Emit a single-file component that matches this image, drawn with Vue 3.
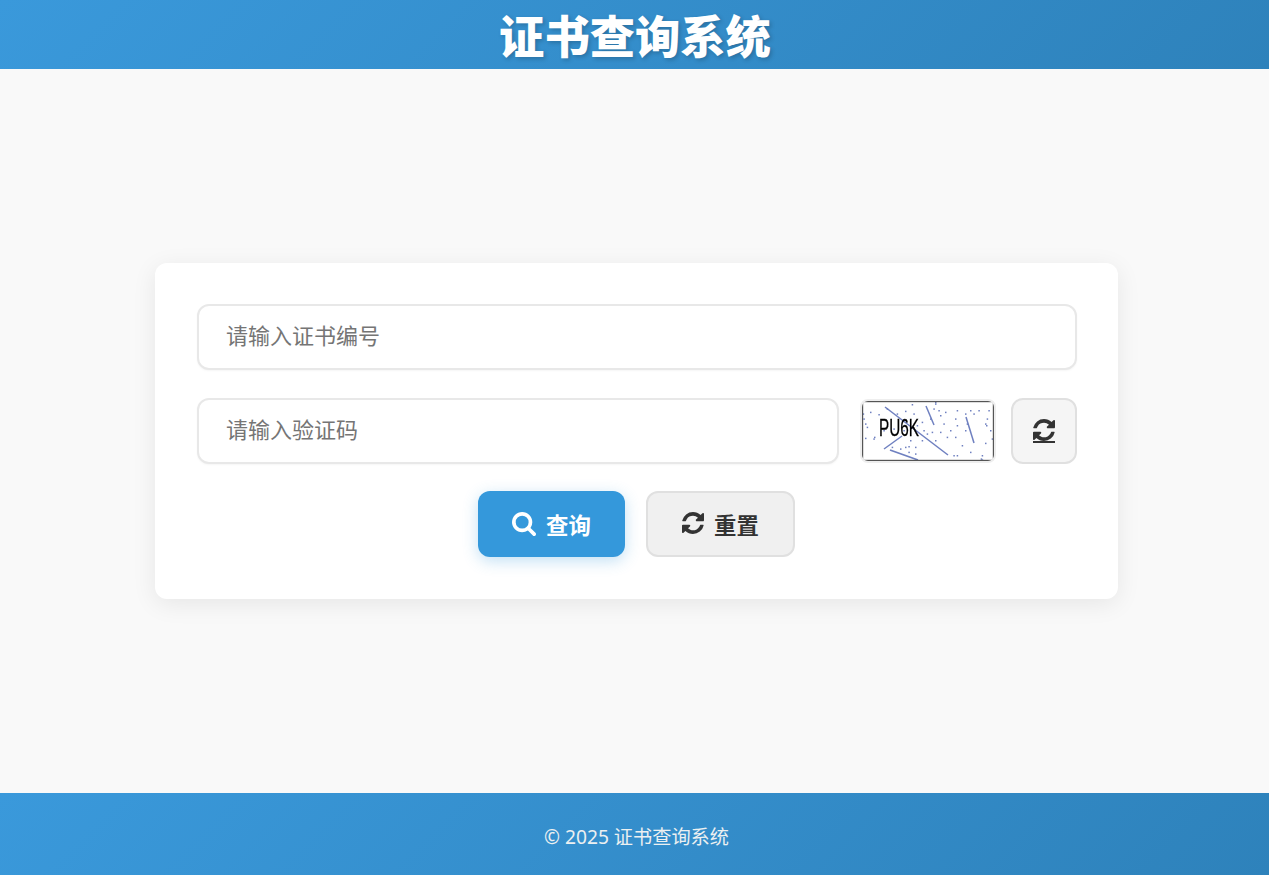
<script setup>
const refreshPath = 'M1511 928q0 5-1 7-64 268-268 434.5t-478 166.5q-146 0-282.5-55t-243.5-157l-129 129q-19 19-45 19t-45-19-19-45v-448q0-26 19-45t45-19h448q26 0 45 19t19 45-19 45l-137 137q71 66 161 102t187 36q134 0 250-65t186-179q11-17 53-117 8-23 30-23h192q13 0 22.5 9.5t9.5 22.5zm25-800v448q0 26-19 45t-45 19h-448q-26 0-45-19t-19-45 19-45l138-138q-148-137-349-137-134 0-250 65t-186 179q-11 17-53 117-8 23-30 23h-199q-13 0-22.5-9.5t-9.5-22.5v-7q65-268 270-434.5t480-166.5q146 0 284 55.5t245 156.5l130-129q19-19 45-19t45 19 19 45z'
const searchPath = 'M1152 704q0-185-131.5-316.5t-316.5-131.5-316.5 131.5-131.5 316.5 131.5 316.5 316.5 131.5 316.5-131.5 131.5-316.5zm512 832q0 52-38 90t-90 38q-54 0-90-38l-343-342q-179 124-399 124-143 0-273.5-55.5t-225-150-150-225-55.5-273.5 55.5-273.5 150-225 225-150 273.5-55.5 273.5 55.5 225 150 150 225 55.5 273.5q0 220-124 399l343 343q37 37 37 90z'
const lines = [
  [23, 6, 86, 54, 1.5],
  [64, 5, 72, 24, 1.5],
  [104, 16, 112, 42, 1.5],
  [40, 35, 22, 48, 1.5],
  [28, 49, 56, 59, 1.8],
]
// noise dots, positions read from the reference at 3x, converted to local px
const raw = [
  [185,42],[255,35],[40,85],[45,100],[60,65],[85,72],[110,55],[140,70],[165,62],[190,70],
  [45,143],[72,140],[100,120],[130,115],[220,120],[245,125],[270,125],[215,95],[240,85],[265,60],
  [285,65],[270,75],[315,85],[320,105],[315,140],[345,70],[360,60],[370,70],[410,85],[408,105],
  [425,145],[430,190],[405,158],[360,185],[395,195],[392,205],[310,195],[320,195],[310,210],[255,150],
  [215,150],[195,170],[175,168],[175,185],[195,190],[165,170],[125,170],[230,130],[290,140],[345,120],
  [50,110],[38,70],[70,145],[160,120],[200,105],[280,100],[300,120],[335,165],[385,60],[420,120],
  [415,60],[405,100],[350,100],[250,55],[320,60],[255,40],[200,210],[395,208],[180,150],[150,175]
]
const dots = raw.map(([x, y]) => [x / 3 - 12, y / 3 - 11])
</script>

<template>
  <div class="page">
    <header class="top">
      <h1>证书查询系统</h1>
    </header>
    <main class="main">
      <form class="card" @submit.prevent>
        <input class="field" type="text" placeholder="请输入证书编号" />
        <div class="captcha-row">
          <input class="field grow" type="text" placeholder="请输入验证码" />
          <div class="captcha">
            <svg viewBox="0 0 132 60" width="132" height="60">
              <rect x="0" y="0" width="132" height="60" fill="#fff" />
              <rect v-for="(d, i) in dots" :key="i" :x="d[0]" :y="d[1]" width="1.5" height="1.5" fill="#6f80c0" />
              <line v-for="(l, i) in lines" :key="'l' + i" :x1="l[0]" :y1="l[1]" :x2="l[2]" :y2="l[3]" :stroke-width="l[4]" stroke="#6f80c0" />
              <text x="17" y="35" textLength="40" lengthAdjust="spacingAndGlyphs" class="code">PU6K</text>
              <rect x="0.5" y="0.5" width="131" height="59" fill="none" stroke="#555" stroke-width="1.4" />
            </svg>
          </div>
          <button type="button" class="square">
            <span class="under">
              <svg class="ic" viewBox="0 0 1536 1536" width="22" height="22"><path :d="refreshPath" /></svg>
            </span>
          </button>
        </div>
        <div class="actions">
          <button type="submit" class="btn primary">
            <svg class="ic" viewBox="0 0 1664 1664" width="24" height="24"><path :d="searchPath" /></svg>
            <span>查询</span>
          </button>
          <button type="reset" class="btn plain">
            <svg class="ic lift" viewBox="0 0 1536 1536" width="22" height="22"><path :d="refreshPath" /></svg>
            <span>重置</span>
          </button>
        </div>
      </form>
    </main>
    <footer class="bottom">© 2025 证书查询系统</footer>
  </div>
</template>

<style>
body { margin: 0; }
</style>

<style scoped>
.page {
  min-height: 875px;
  display: flex;
  flex-direction: column;
  background: #f9f9f9;
  font-family: "Noto Sans", "Noto Sans CJK SC", sans-serif;
  color: #333;
}
.top {
  height: 69px;
  box-sizing: border-box;
  padding: 5px 0 0 1px;
  background: linear-gradient(135deg, #3a99db, #2e82bb);
  display: flex;
  align-items: center;
  justify-content: center;
}
h1 {
  margin: 0;
  font-size: 45.3px;
  font-weight: 900;
  line-height: 62px;
  color: #fff;
  text-shadow: 2px 2px 4px rgba(0, 0, 0, 0.2);
}
.main {
  flex: 1;
  box-sizing: border-box;
  padding-left: 4px;
  display: flex;
  align-items: center;
  justify-content: center;
}
.card {
  width: 963px;
  box-sizing: border-box;
  padding: 41px 41px 42px 42px;
  background: #fff;
  border-radius: 12px;
  box-shadow: 0 5px 25px rgba(0, 0, 0, 0.08);
  display: flex;
  flex-direction: column;
  gap: 28px;
}
.field {
  height: 66px;
  box-sizing: border-box;
  width: 100%;
  padding: 0 27px 4px;
  border: 2px solid #e8e8e8;
  border-radius: 12px;
  box-shadow: 0 1px 2px rgba(0, 0, 0, 0.04);
  background: #fff;
  font: inherit;
  font-size: 22px;
  outline: none;
}
.field::placeholder { color: #757575; }
.grow { flex: 1; width: auto; min-width: 0; }
.captcha-row {
  display: flex;
  align-items: center;
  gap: 15px;
}
.captcha-row .grow { margin-right: 6px; }
.captcha {
  width: 136px;
  height: 64px;
  box-sizing: border-box;
  border: 2px solid #eee;
  border-radius: 8px;
  overflow: hidden;
  flex: none;
}
.captcha svg { display: block; filter: blur(0.35px); }
.code {
  font-family: "Liberation Sans", sans-serif;
  font-size: 24px;
  fill: #000;
  stroke: #000;
  stroke-width: 0.3;
}
.square {
  width: 66px;
  height: 66px;
  flex: none;
  box-sizing: border-box;
  border: 2px solid #e0e0e0;
  border-radius: 12px;
  background: #f5f5f5;
  color: #333;
  padding: 0;
  display: flex;
  align-items: center;
  justify-content: center;
}
.under {
  display: block;
  border-bottom: 2px solid #333;
  line-height: 0;
}
.ic { fill: currentColor; display: block; }
.lift { margin-top: -3px; }
.actions {
  display: flex;
  justify-content: center;
  gap: 21px;
  margin: -1px 1px 0 0;
}
.btn {
  height: 66px;
  box-sizing: border-box;
  border-radius: 12px;
  font: inherit;
  font-size: 22.4px;
  font-weight: 700;
  display: flex;
  align-items: center;
  justify-content: center;
  gap: 10px;
  padding: 0;
}
.primary {
  width: 147px;
  border: none;
  background: #3498db;
  color: #fff;
  box-shadow: 0 4px 15px rgba(52, 152, 219, 0.3);
}
.plain {
  width: 149px;
  border: 2px solid #e0e0e0;
  background: #f0f0f0;
  color: #333;
}
.bottom {
  height: 82px;
  box-sizing: border-box;
  padding: 4px 0 0 4px;
  background: linear-gradient(135deg, #3a99db, #2e82bb);
  color: #ecf0f1;
  font-size: 19.2px;
  display: flex;
  align-items: center;
  justify-content: center;
}
</style>
